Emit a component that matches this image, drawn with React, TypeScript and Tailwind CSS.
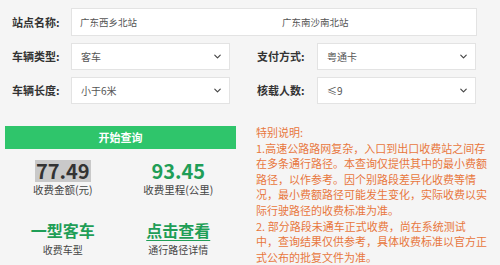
import { ChevronDown } from "lucide-react";

const FONT = { fontFamily: '"Noto Sans CJK SC", "Noto Sans", sans-serif' };

function Label({ text, className = "" }: { text: string; className?: string }) {
  return <span className={`text-[11px] font-bold text-[#333] ${className}`}>{text}</span>;
}

function Select({ value }: { value: string }) {
  return (
    <div className="flex h-[27px] w-[159px] items-center justify-between border border-[#e3e3e3] bg-white pl-[9px] pr-[6px]">
      <span className="text-[10px] text-[#555]">{value}</span>
      <ChevronDown size={11} strokeWidth={2.5} className="text-[#444]" />
    </div>
  );
}

function Stat({ value, label, tone }: { value: string; label: string; tone: "dark" | "green" }) {
  return (
    <div className="flex flex-col items-center">
      <span
        className={`px-[1px] text-[20px] font-bold leading-[22px] ${
          tone === "dark" ? "bg-[#c9c9c9] text-[#333]" : "text-[#1f9e57]"
        }`}
      >
        {value}
      </span>
      <span className="mt-[2px] text-[10.5px] leading-[12px] text-[#444]">{label}</span>
    </div>
  );
}

export default function App() {
  return (
    <div style={FONT} className="h-[265px] w-[500px] overflow-hidden bg-[#f5f5f5]">
      {/* 查询条件 */}
      <div className="flex flex-col gap-[7px] pt-[8px]">
        <div className="flex items-center">
          <Label text="站点名称:" className="w-[71px] pl-[12px]" />
          <div className="grid h-[28px] w-[406px] grid-cols-2 items-center border border-[#e3e3e3] bg-white text-[9.5px] text-[#555]">
            <span className="pl-[8px]">广东西乡北站</span>
            <span className="pl-[8px]">广东南沙南北站</span>
          </div>
        </div>
        <div className="flex items-center">
          <Label text="车辆类型:" className="w-[71px] pl-[12px]" />
          <Select value="客车" />
          <Label text="支付方式:" className="w-[87px] pl-[27px]" />
          <Select value="粤通卡" />
        </div>
        <div className="flex items-center">
          <Label text="车辆长度:" className="w-[71px] pl-[12px]" />
          <Select value="小于6米" />
          <Label text="核载人数:" className="w-[87px] pl-[27px]" />
          <Select value="≤9" />
        </div>
      </div>

      {/* 查询结果 */}
      <div className="mt-[22px] flex">
        <div className="ml-[5px] w-[231px]">
          <button className="flex h-[23px] w-full items-center justify-center bg-[#2fc56b] text-[11px] font-bold text-white">
            开始查询
          </button>
          <div className="mt-[11px] grid grid-cols-2">
            <Stat value="77.49" label="收费金额(元)" tone="dark" />
            <Stat value="93.45" label="收费里程(公里)" tone="green" />
          </div>
          <div className="mt-[24px] grid grid-cols-2">
            <div className="flex flex-col items-center">
              <span className="text-[16px] font-bold leading-[20px] text-[#1f9e57]">一型客车</span>
              <span className="mt-[3px] text-[10px] leading-[14px] text-[#444]">收费车型</span>
            </div>
            <div className="flex flex-col items-center">
              <span className="text-[16px] font-bold leading-[20px] text-[#1f9e57] underline underline-offset-[3px]">
                点击查看
              </span>
              <span className="mt-[3px] text-[10px] leading-[14px] text-[#444]">通行路径详情</span>
            </div>
          </div>
        </div>
        <p className="ml-[20px] -mt-[1px] text-[11px] leading-[15.6px] text-[#e8773d]">
          特别说明:
          <br />
          1.高速公路路网复杂，入口到出口收费站之间存
          <br />
          在多条通行路径。本查询仅提供其中的最小费额
          <br />
          路径，以作参考。因个别路段差异化收费等情
          <br />
          况，最小费额路径可能发生变化，实际收费以实
          <br />
          际行驶路径的收费标准为准。
          <br />
          2. 部分路段未通车正式收费，尚在系统测试
          <br />
          中，查询结果仅供参考，具体收费标准以官方正
          <br />
          式公布的批复文件为准。
        </p>
      </div>
    </div>
  );
}
